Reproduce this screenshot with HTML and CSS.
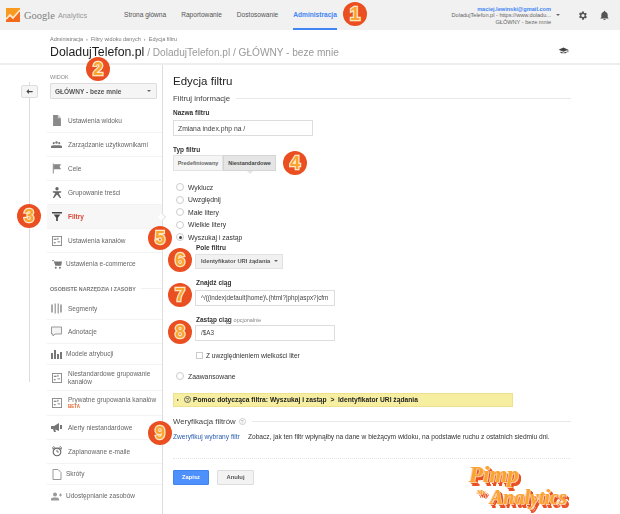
FILE: index.html
```html
<!DOCTYPE html>
<html lang="pl">
<head>
<meta charset="utf-8">
<title>Edycja filtru</title>
<link rel="stylesheet" href="styles.css">
</head>
<body>
<div class="page">
  <header class="topbar">
    <div class="brand">
      <svg class="logo" viewBox="0 0 14 14"><rect width="14" height="14" fill="#f79a1f"/><path d="M0 14V9l4-3 3 3 7-8v13z" fill="#f26a1b"/><path d="M0 11l4-4 3 3 7-8" fill="none" stroke="#ffe9c8" stroke-width="1.8"/></svg>
      <span class="brand-google">Google</span><span class="brand-an">Analytics</span>
    </div>
    <nav class="nav">
      <a class="nav-item">Strona główna</a>
      <a class="nav-item">Raportowanie</a>
      <a class="nav-item">Dostosowanie</a>
      <a class="nav-item active">Administracja</a>
    </nav>
    <div class="account">
      <div class="acc-text">
        <div class="acc-mail">maciej.lewinski@gmail.com</div>
        <div>DoladujTelefon.pl - https://www.doladu...</div>
        <div>GŁÓWNY - beze mnie</div>
      </div>
      <span class="caret acc-caret"></span>
      <svg class="gear" viewBox="0 0 24 24"><path fill="#555" d="M19.400 13a7.500 7.500 0 0 0 0-2l2.100-1.600-2-3.500-2.500 1a7.500 7.500 0 0 0-1.700-1L15 3h-4l-.4 2.700a7.500 7.500 0 0 0-1.700 1l-2.500-1-2 3.500L6.600 11a7.500 7.500 0 0 0 0 2l-2.100 1.600 2 3.500 2.500-1a7.500 7.500 0 0 0 1.700 1L11 21h4l.4-2.700a7.500 7.500 0 0 0 1.700-1l2.500 1 2-3.500zM13 15.500a3.500 3.500 0 1 1 0-7 3.500 3.500 0 0 1 0 7z"/></svg>
      <svg class="bell" viewBox="0 0 24 24"><path fill="#555" d="M12 22a2.500 2.500 0 0 0 2.500-2.500h-5A2.500 2.500 0 0 0 12 22zm7-6v-5c0-3.400-2-6.200-5.500-7V3a1.500 1.500 0 0 0-3 0v1C7 4.800 5 7.600 5 11v5l-2 2v.5h18V18z"/></svg>
    </div>
  </header>

  <section class="titlebar">
    <div class="crumbs">Administracja &nbsp;›&nbsp; Filtry widoku danych &nbsp;›&nbsp; Edycja filtru</div>
    <div class="title-row">
      <h1 class="title"><span class="title-main">DoladujTelefon.pl</span><span class="title-sub"> / DoladujTelefon.pl / GŁÓWNY - beze mnie</span></h1>
      <svg class="hat" viewBox="0 0 24 16"><path fill="#444" d="M12 1 1 6l11 5 9-4v5h2V6zM5 10v3c2 2 12 2 14 0v-3l-7 3z"/></svg>
    </div>
  </section>

  <main class="main">
    <div class="rail">
      <div class="rail-line"></div>
      <button class="back"><svg viewBox="0 0 10 8"><path fill="#444" d="M4 0v3h6v2H4v3L0 4z"/></svg></button>
    </div>

    <aside class="sidebar">
      <div class="view-label">WIDOK</div>
      <div class="view-select"><span>GŁÓWNY - beze mnie</span><span class="caret"></span></div>

      <ul class="menu menu-a">
        <li class="item h24"><svg class="ico" viewBox="0 0 12 14"><path d="M1 0h6l4 4v10H1z" fill="#8a8a8a"/><path d="M7 0v4h4" fill="#ccc"/></svg><span>Ustawienia widoku</span></li>
        <li class="item h24"><svg class="ico wide" viewBox="0 0 16 10"><circle cx="4" cy="3" r="1.500" fill="#777"/><circle cx="8" cy="2" r="1.800" fill="#777"/><circle cx="12" cy="3" r="1.500" fill="#777"/><path d="M0 10V7l3-1h10l3 1v3z" fill="#777"/></svg><span>Zarządzanie użytkownikami</span></li>
        <li class="item h24"><svg class="ico" viewBox="0 0 12 12"><path d="M1 0h1v12H1z" fill="#777"/><path d="M2 1h9L9 4l2 3H2z" fill="#888"/></svg><span>Cele</span></li>
        <li class="item h24"><svg class="ico" viewBox="0 0 12 13"><circle cx="6" cy="2" r="2" fill="#666"/><path d="M1 5h10v1.500L8 7l3 6H9.500L6 9l-3.500 4H1l3-6-3-.5z" fill="#666"/></svg><span>Grupowanie treści</span></li>
        <li class="item h24 current"><svg class="ico" viewBox="0 0 12 11"><path d="M0 0h12v2H0zM2 3h8L7 7v4H5V7z" fill="#444"/></svg><span>Filtry</span></li>
        <li class="item h24"><svg class="ico boxed" viewBox="0 0 11 11"><rect x=".5" y=".5" width="10" height="10" fill="#fff" stroke="#888"/><path d="M2 3h3v1H2zM6 6h3v1H6zM2 7h2v1H2zM6 2h1v2H6z" fill="#666"/></svg><span>Ustawienia kanałów</span></li>
        <li class="item h22 tight last"><svg class="ico" viewBox="0 0 12 11"><path d="M0 0h2l1 2h9l-1 5H4L2 1H0z" fill="#777"/><circle cx="4.500" cy="9.500" r="1.200" fill="#777"/><circle cx="9.500" cy="9.500" r="1.200" fill="#777"/></svg><span>Ustawienia e-commerce</span></li>
      </ul>

      <div class="menu-head"><span>OSOBISTE NARZĘDZIA I ZASOBY</span><i></i></div>

      <ul class="menu menu-b">
        <li class="item h22"><svg class="ico wide" viewBox="0 0 11 10"><path d="M0 1h2v8H0zM3.500 0H5v10H3.500zM6.500 0H8v10H6.500zM9 1h2v8H9z" fill="#aaa"/></svg><span>Segmenty</span></li>
        <li class="item h24 sq"><svg class="ico wide" viewBox="0 0 11 10"><path d="M.5.500h10v7H4L2 9.500v-2H.5z" fill="#f4f4f4" stroke="#999"/></svg><span>Adnotacje</span></li>
        <li class="item h21 tight"><svg class="ico wide" viewBox="0 0 11 9"><path d="M0 3h2v6H0zM3 0h2v9H3zM6 4h2v5H6zM9 2h2v7H9z" fill="#777"/></svg><span>Modele atrybucji</span></li>
        <li class="item h26"><svg class="ico boxed" viewBox="0 0 11 11"><rect x=".5" y=".5" width="10" height="10" fill="#fff" stroke="#888"/><path d="M2 3h3v1H2zM6 6h3v1H6zM2 7h2v1H2zM6 2h1v2H6z" fill="#666"/></svg><span>Niestandardowe grupowanie kanałów</span></li>
        <li class="item h25"><svg class="ico boxed" viewBox="0 0 11 11"><rect x=".5" y=".5" width="10" height="10" fill="#fff" stroke="#888"/><path d="M2 3h3v1H2zM6 6h3v1H6zM2 7h2v1H2zM6 2h1v2H6z" fill="#666"/></svg><span>Prywatne grupowania kanałów<em class="beta">BETA</em></span></li>
        <li class="item h24"><svg class="ico wide" viewBox="0 0 11 9"><path d="M0 3h3l5-3v8L3 6H0zM9 2h2v4H9zM2 6h2l1 3H3z" fill="#777"/></svg><span>Alerty niestandardowe</span></li>
        <li class="item h24"><svg class="ico" viewBox="0 0 11 11"><circle cx="5.500" cy="6" r="4.200" fill="none" stroke="#666" stroke-width="1.200"/><path d="M5.500 3.500V6h2M0 2l2-2 1 1-2 2zM11 2 9 0 8 1l2 2z" fill="none" stroke="#666"/></svg><span>Zaplanowane e-maile</span></li>
        <li class="item h21 tight"><svg class="ico" viewBox="0 0 9 11"><path d="M.5.500h5l3 3v7h-8z" fill="#fff" stroke="#999"/></svg><span>Skróty</span></li>
        <li class="item h22 tight last"><svg class="ico wide" viewBox="0 0 11 8"><circle cx="4" cy="2" r="2" fill="#999"/><path d="M0 8V6l2-1h4l2 1v2zM8 2h1V1h1v1h1v1h-1v1H9V3H8z" fill="#999"/></svg><span>Udostępnianie zasobów</span></li>
      </ul>
    </aside>

    <div class="content">
      <h2 class="page-title">Edycja filtru</h2>
      <div class="section-head"><span>Filtruj informacje</span><i></i></div>

      <label class="field-label name-label">Nazwa filtru</label>
      <div class="input input-name">Zmiana index.php na /</div>

      <label class="field-label type-label">Typ filtru</label>
      <div class="seg">
        <span class="seg-btn">Predefiniowany</span><span class="seg-btn on">Niestandardowe</span>
      </div>

      <ul class="radios">
        <li><i class="radio"></i>Wyklucz</li>
        <li><i class="radio"></i>Uwzględnij</li>
        <li><i class="radio"></i>Małe litery</li>
        <li><i class="radio"></i>Wielkie litery</li>
        <li><i class="radio sel"></i>Wyszukaj i zastąp</li>
      </ul>

      <div class="sub">
        <label class="sub-label field-label">Pole filtru</label>
        <div class="field-select"><span>Identyfikator URI żądania</span><span class="caret"></span></div>
        <label class="field-label find-label">Znajdź ciąg</label>
        <div class="input input-long">^/((index|default|home)\.(html?|php|aspx?|cfm</div>
        <label class="field-label repl-label">Zastąp ciąg <small>opcjonalnie</small></label>
        <div class="input input-long input-repl">/$A3</div>
        <div class="check"><i class="box"></i>Z uwzględnieniem wielkości liter</div>
      </div>

      <div class="adv"><i class="radio"></i>Zaawansowane</div>

      <div class="help"><span class="tri"></span><span class="q">?</span><b>Pomoc dotycząca filtra: Wyszukaj i zastąp &nbsp;&gt;&nbsp; Identyfikator URI żądania</b></div>

      <div class="section-head verify"><span>Weryfikacja filtrów</span><span class="q light">?</span><i></i></div>
      <div class="verify-row"><a>Zweryfikuj wybrany filtr</a><span>Zobacz, jak ten filtr wpłynąłby na dane w bieżącym widoku, na podstawie ruchu z ostatnich siedmiu dni.</span></div>

      <div class="actions">
        <button class="btn primary">Zapisz</button>
        <button class="btn">Anuluj</button>
      </div>
    </div>
  </main>

  <span class="badge b1">1</span>
  <span class="badge b2">2</span>
  <span class="badge b3">3</span>
  <span class="badge b4">4</span>
  <span class="badge b5">5</span>
  <span class="badge b6">6</span>
  <span class="badge b7">7</span>
  <span class="badge b8">8</span>
  <span class="badge b9">9</span>
  <div class="pimp"><span class="p1">Pimp</span><span class="p2">My</span><span class="p3">Analytics</span></div>
</div>
</body>
</html>
```

FILE: styles.css
```css
* { box-sizing: border-box; }
html, body { margin: 0; padding: 0; background: #fff; }
body { font-family: "Liberation Sans", Arial, sans-serif; font-size: 7px; color: #333; }
ul { list-style: none; margin: 0; padding: 0; }
.page { position: relative; width: 620px; height: 514px; overflow: hidden; filter: blur(.3px); }

.topbar { display: flex; height: 30px; background: #f1f1f1; }
.brand { width: 124px; display: flex; align-items: center; padding-left: 6px; }
.logo { width: 14px; height: 14px; margin-right: 4px; }
.brand-google { font-size: 10.500px; color: #808080; font-family: "Liberation Serif", serif; margin-right: 3px; }
.brand-an { font-size: 7.300px; color: #999; }
.nav { display: flex; gap: 15px; height: 30px; }
.nav-item { display: flex; align-items: center; font-size: 6.600px; color: #555; border-bottom: 2px solid transparent; }
.nav-item.active { color: #4285f4; font-weight: bold; border-bottom-color: #4285f4; }
.account { margin-left: auto; display: flex; align-items: center; padding-right: 10px; }
.acc-text { text-align: right; font-size: 5.600px; line-height: 6.200px; color: #666; padding-top: 1px; }
.acc-mail { color: #4285f4; font-weight: bold; }
.caret { display: inline-block; width: 0; height: 0; border: 2px solid transparent; border-top: 2.500px solid #666; border-bottom: 0; }
.acc-caret { margin: 0 0 0 5px; }
.gear { width: 11px; height: 11px; margin-left: 17px; }
.bell { width: 11px; height: 11px; margin-left: 11px; }

.titlebar { height: 35px; padding: 6px 50px 0; border-bottom: 2px solid #eee; }
.crumbs { font-size: 5.500px; color: #777; line-height: 7px; }
.title-row { display: flex; align-items: center; justify-content: space-between; height: 15px; margin-top: 2px; width: 520px; }
.title { margin: 0; font-weight: normal; font-size: 12.300px; line-height: 15px; color: #222; white-space: nowrap; }
.title-sub { font-size: 10.100px; color: #999; }
.hat { width: 11px; height: 7px; margin: -4px 1px 0 0; }

.main { display: flex; }
.rail { position: relative; width: 47px; flex: none; }
.rail-line { width: 1px; height: 300px; margin: 17px 0 0 29px; background: #ddd; }
.back { position: absolute; left: 21px; top: 20px; width: 17px; height: 13px; padding: 0; display: flex; align-items: center; justify-content: center; background: #f5f5f5; border: 1px solid #ddd; border-radius: 2px; }
.back svg { width: 7px; height: 5px; }

.sidebar { width: 116px; flex: none; height: 449px; border-right: 1px solid #ddd; }
.view-label { font-size: 5.500px; color: #888; line-height: 7px; margin-top: 9px; padding-left: 3px; }
.view-select { display: flex; align-items: center; justify-content: space-between; width: 107px; height: 16px; margin: 2px 0 0 3px; padding: 0 5px 0 4px; background: #f5f5f5; border: 1px solid #ddd; border-radius: 1px; font-size: 6.500px; font-weight: bold; color: #555; }
.menu-a { margin-top: 10px; }
.menu-head { display: flex; align-items: center; height: 23px; padding: 4px 0 0 3px; font-size: 5.300px; font-weight: bold; color: #777; white-space: nowrap; }
.menu-head i { flex: 1; height: 1px; margin-left: 5px; background: #f0f0f0; }
.item { display: flex; align-items: center; padding-left: 4px; border-bottom: 1px solid #f3f3f3; font-size: 6.500px; line-height: 7.500px; color: #666; }
.item span { margin-left: 6px; }
.item.tight span { margin-left: 4px; }
.item.last { border-bottom: 0; }
.h21 { height: 21px; } .h22 { height: 22px; } .h24 { height: 24px; } .h25 { height: 25px; } .h26 { height: 26px; }
.item .ico { width: 10px; height: 11px; flex: none; margin-left: 1px; }
.item .ico.wide { width: 11px; margin-left: 0; }
.item .ico.boxed { width: 10px; height: 10px; }
.current { position: relative; background: #f7f7f7; color: #db4437; font-weight: bold; }
.current::after { content: ""; position: absolute; right: -3px; top: 9px; width: 5px; height: 5px; background: #fff; border-top: 1px solid #e4e4e4; border-right: 1px solid #e4e4e4; transform: rotate(45deg); }
.beta { display: block; font-style: normal; font-size: 4.500px; line-height: 6px; color: #e8632c; font-weight: bold; }

.content { flex: none; width: 408px; padding-left: 10px; font-size: 7px; color: #333; }
.page-title { margin: 10px 0 0; font-size: 11.500px; line-height: 13px; font-weight: normal; color: #222; }
.section-head { display: flex; align-items: center; height: 12px; margin-top: 4px; font-size: 7.800px; color: #444; }
.section-head span:first-child { white-space: nowrap; }
.section-head i { flex: 1; height: 1px; background: #e8e8e8; margin-left: 6px; }
.field-label { display: block; font-weight: bold; font-size: 6.500px; line-height: 8px; color: #333; }
.field-label small { font-weight: normal; font-size: 5.500px; color: #888; }
.name-label { margin-top: 5px; }
.input { height: 16px; display: flex; align-items: center; padding: 0 4px; border: 1px solid #ddd; font-size: 6.800px; color: #444; white-space: nowrap; overflow: hidden; background: #fff; }
.input-name { width: 140px; margin-top: 3px; }
.type-label { margin-top: 10px; }
.seg { display: flex; margin-top: 1px; width: 103px; height: 16px; }
.seg-btn { position: relative; display: flex; align-items: center; justify-content: center; height: 16px; background: #f5f5f5; border: 1px solid #e2e2e2; font-size: 5.500px; font-weight: bold; color: #666; width: 50px; }
.seg-btn.on { width: 53px; background: #e5e5e5; border-color: #d5d5d5; color: #444; }
.seg-btn.on::after { content: ""; position: absolute; left: 23px; bottom: -4px; border: 3px solid transparent; border-top: 3px solid #e5e5e5; border-bottom: 0; }
.radios { margin-top: 10px; padding-left: 3px; }
.radios li { display: flex; align-items: center; height: 12.500px; font-size: 6.800px; color: #333; }
.radio { display: block; position: relative; width: 8px; height: 8px; margin-right: 4px; border: 1px solid #ccc; border-radius: 50%; background: #fff; flex: none; }
.radio.sel::after { content: ""; position: absolute; left: 1.500px; top: 1.500px; width: 3px; height: 3px; border-radius: 50%; background: #444; }
.sub { padding-left: 22px; }
.sub-label { padding-left: 1px; }
.field-select { display: flex; align-items: center; justify-content: space-between; width: 88px; height: 15px; margin-top: 2px; padding: 0 4px 0 5px; background: #f1f1f1; border: 1px solid #e2e2e2; font-size: 5.800px; font-weight: bold; color: #555; }
.find-label { margin-top: 10px; padding-left: 1px; }
.input-long { width: 140px; margin-top: 3px; font-size: 6.300px; padding: 0 3px 0 5px; }
.repl-label { margin-top: 10px; padding-left: 1px; }
.input-repl { margin-top: 1px; }
.check { display: flex; align-items: center; height: 8px; margin-top: 11px; padding-left: 1px; font-size: 6.600px; color: #333; }
.box { width: 7px; height: 7px; margin-right: 3px; border: 1px solid #ccc; background: #fff; }
.adv { display: flex; align-items: center; height: 9px; margin-top: 12px; padding-left: 3px; font-size: 6.800px; color: #333; }
.help { display: flex; align-items: center; width: 340px; height: 14px; margin-top: 12px; padding-left: 3px; background: #f6eea1; border: 1px solid #eee08c; font-size: 6.700px; color: #222; white-space: nowrap; }
.tri { width: 0; height: 0; border: 1.500px solid transparent; border-left: 2.500px solid #444; border-right: 0; margin: 0 5px 0 0; }
.q { display: inline-flex; align-items: center; justify-content: center; width: 7px; height: 7px; margin-right: 2px; border: 1px solid #666; border-radius: 50%; font-size: 5px; }
.q.light { margin: 0 0 0 3px; border-color: #ccc; color: #aaa; }
.verify { margin-top: 9px; }
.verify-row { display: flex; align-items: center; height: 10px; margin-top: 4px; font-size: 6.600px; color: #333; white-space: nowrap; }
.verify-row a { width: 75px; color: #2a5db0; }
.actions { display: flex; gap: 8px; margin-top: 16px; padding-top: 11px; border-top: 1px dotted #e5e5e5; }
.btn { width: 37px; height: 15px; padding: 0; font-family: inherit; font-size: 5.800px; font-weight: bold; color: #555; background: #f3f3f3; border: 1px solid #ddd; border-radius: 1px; }
.btn.primary { width: 36px; background: #4d90fe; border-color: #3f83ee; color: #fff; }

.badge { position: absolute; display: flex; align-items: center; justify-content: center; width: 24px; height: 24px; margin: -12px 0 0 -12px; border-radius: 50%; background: #ea4f22; color: #f8a42f; font-weight: bold; font-size: 18px; -webkit-text-stroke: 2.500px #ffe6c4; paint-order: stroke fill; }
.b1 { left: 355px; top: 14px; }
.b2 { left: 98px; top: 69px; }
.b3 { left: 29px; top: 216px; }
.b4 { left: 295px; top: 163px; }
.b5 { left: 160px; top: 238px; }
.b6 { left: 180px; top: 260px; }
.b7 { left: 180px; top: 295px; }
.b8 { left: 180px; top: 332px; }
.b9 { left: 160px; top: 433px; }

.pimp { position: absolute; left: 466px; top: 462px; width: 106px; height: 50px; font-family: "Liberation Serif", serif; font-style: italic; font-weight: bold; color: #f8a42f; text-shadow: -1px 0 0 #ffc9a0, 1px 1px 0 #ffc9a0, 2px 2px 0 #ea4f22, 3px 3px 0 #ea4f22, 3px 4px 0 #ea4f22; }
.pimp span { position: absolute; white-space: nowrap; }
.p1 { left: 3px; top: 1px; font-size: 23px; line-height: 24px; }
.p2 { left: 11px; top: 26px; font-size: 6.500px; line-height: 8px; }
.p3 { left: 24px; top: 26px; font-size: 20px; line-height: 18px; }
```
